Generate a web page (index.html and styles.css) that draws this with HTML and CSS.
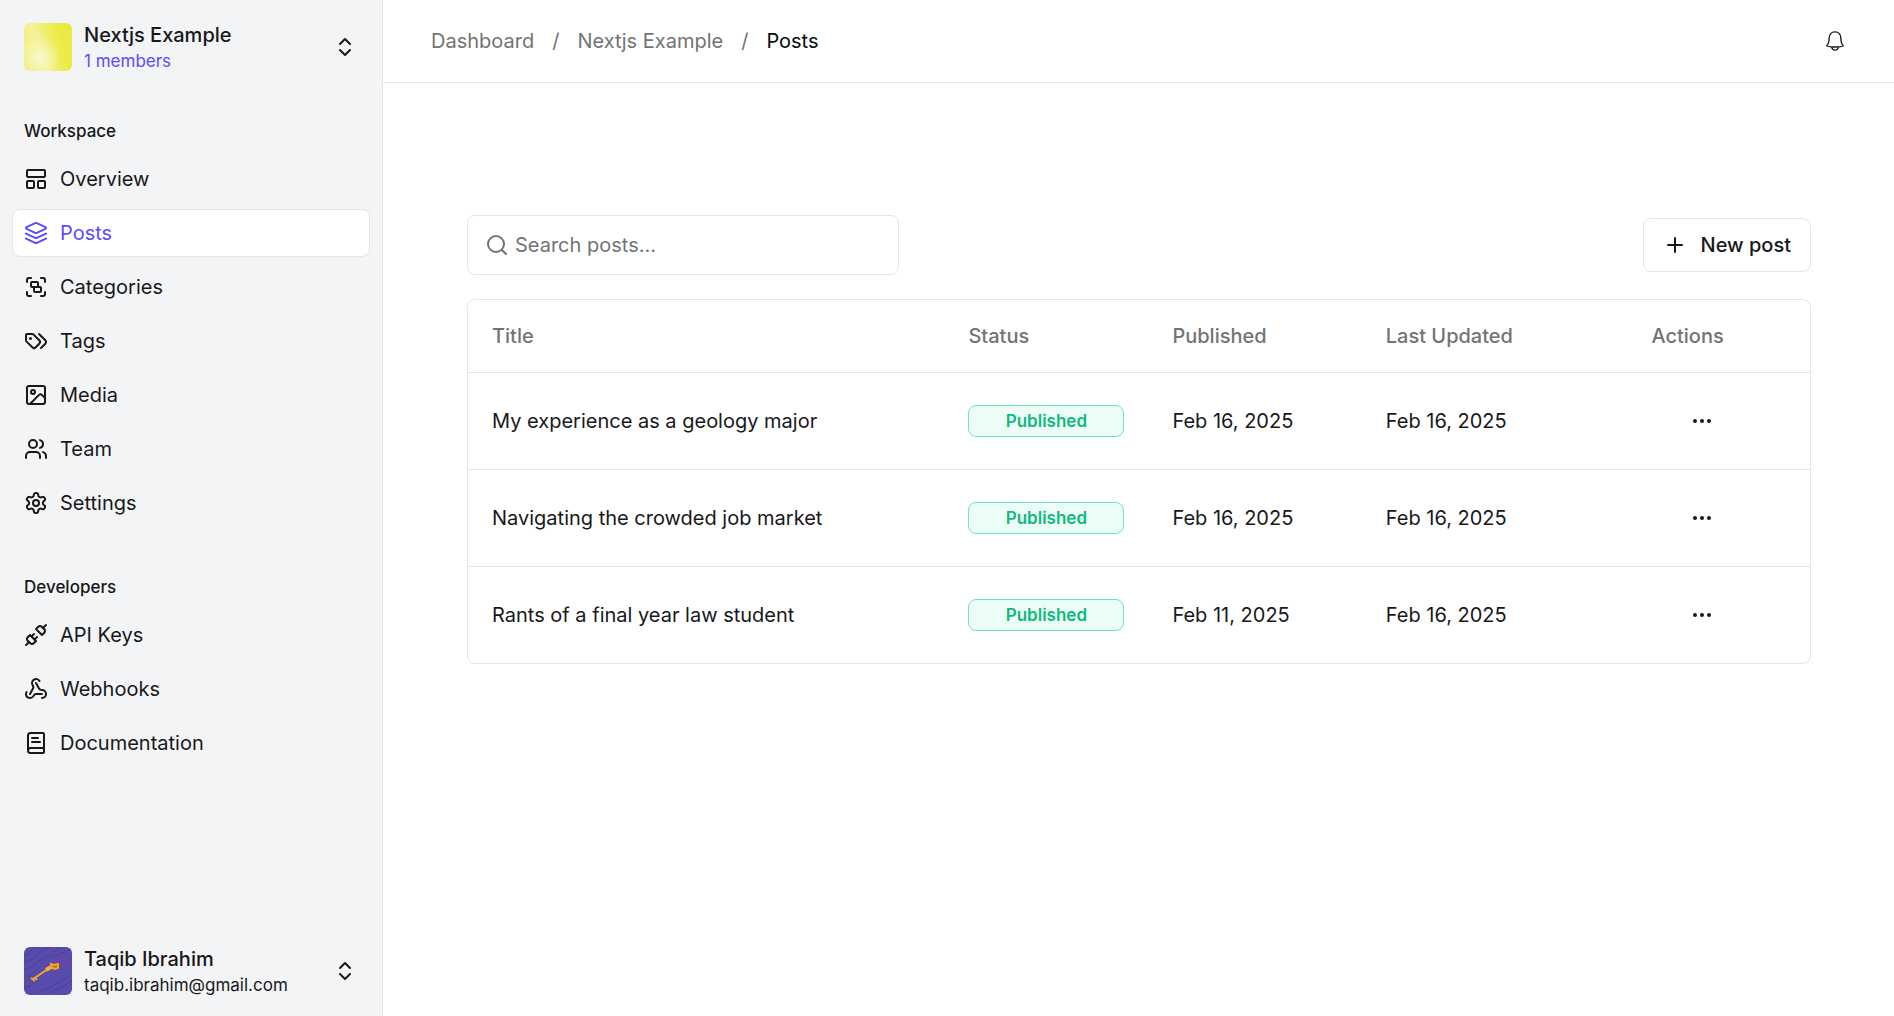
FILE: index.html
```html
<!DOCTYPE html>
<html lang="en">
<head>
<meta charset="utf-8">
<meta name="viewport" content="width=device-width, initial-scale=1">
<title>Posts – Nextjs Example</title>
<link rel="stylesheet" href="styles.css">
</head>
<body>
<div class="app">
  <aside class="sidebar">
    <button class="switcher" type="button">
      <span class="avatar avatar-workspace"></span>
      <span class="switcher-text">
        <span class="switcher-name">Nextjs Example</span>
        <span class="switcher-sub accent">1 members</span>
      </span>
      <svg class="icon chevrons" viewBox="0 0 24 24"><path d="m7 15 5 5 5-5"/><path d="m7 9 5-5 5 5"/></svg>
    </button>

    <nav class="nav">
      <section class="nav-group">
        <h2 class="nav-heading">Workspace</h2>
        <a class="nav-link" href="#"><svg class="icon" viewBox="0 0 24 24"><rect width="18" height="7" x="3" y="3" rx="1"/><rect width="7" height="7" x="3" y="14" rx="1"/><rect width="7" height="7" x="14" y="14" rx="1"/></svg>Overview</a>
        <a class="nav-link active" href="#" aria-current="page"><svg class="icon" viewBox="0 0 24 24"><path d="m12.83 2.18a2 2 0 0 0-1.66 0L2.6 6.08a1 1 0 0 0 0 1.83l8.58 3.91a2 2 0 0 0 1.66 0l8.58-3.9a1 1 0 0 0 0-1.83Z"/><path d="m22 17.65-9.17 4.16a2 2 0 0 1-1.66 0L2 17.65"/><path d="m22 12.65-9.17 4.16a2 2 0 0 1-1.66 0L2 12.65"/></svg>Posts</a>
        <a class="nav-link" href="#"><svg class="icon" viewBox="0 0 24 24"><path d="M3 7V5c0-1.100.9-2 2-2h2"/><path d="M17 3h2c1.100 0 2 .9 2 2v2"/><path d="M21 17v2c0 1.100-.9 2-2 2h-2"/><path d="M7 21H5c-1.100 0-2-.9-2-2v-2"/><rect width="7" height="5" x="7" y="7" rx="1"/><rect width="7" height="5" x="10" y="12" rx="1"/></svg>Categories</a>
        <a class="nav-link" href="#"><svg class="icon" viewBox="0 0 24 24"><path d="m15 5 6.300 6.300a2.400 2.400 0 0 1 0 3.400L17 19"/><path d="M9.586 5.586A2 2 0 0 0 8.172 5H3a1 1 0 0 0-1 1v5.172a2 2 0 0 0 .586 1.414L8.290 18.290a2.426 2.426 0 0 0 3.420 0l3.580-3.580a2.426 2.426 0 0 0 0-3.420z"/><circle cx="6.500" cy="9.500" r=".5" fill="currentColor"/></svg>Tags</a>
        <a class="nav-link" href="#"><svg class="icon" viewBox="0 0 24 24"><rect width="18" height="18" x="3" y="3" rx="2"/><circle cx="9" cy="9" r="2"/><path d="m21 15-3.086-3.086a2 2 0 0 0-2.828 0L6 21"/></svg>Media</a>
        <a class="nav-link" href="#"><svg class="icon" viewBox="0 0 24 24"><path d="M16 21v-2a4 4 0 0 0-4-4H6a4 4 0 0 0-4 4v2"/><circle cx="9" cy="7" r="4"/><path d="M22 21v-2a4 4 0 0 0-3-3.870"/><path d="M16 3.130a4 4 0 0 1 0 7.750"/></svg>Team</a>
        <a class="nav-link" href="#"><svg class="icon" viewBox="0 0 24 24"><path d="M12.220 2h-.44a2 2 0 0 0-2 2v.18a2 2 0 0 1-1 1.730l-.43.25a2 2 0 0 1-2 0l-.15-.08a2 2 0 0 0-2.730.73l-.22.38a2 2 0 0 0 .73 2.730l.15.1a2 2 0 0 1 1 1.720v.51a2 2 0 0 1-1 1.740l-.15.09a2 2 0 0 0-.73 2.730l.22.38a2 2 0 0 0 2.730.73l.15-.08a2 2 0 0 1 2 0l.43.25a2 2 0 0 1 1 1.730V20a2 2 0 0 0 2 2h.44a2 2 0 0 0 2-2v-.18a2 2 0 0 1 1-1.730l.43-.25a2 2 0 0 1 2 0l.15.08a2 2 0 0 0 2.730-.73l.22-.39a2 2 0 0 0-.73-2.730l-.15-.08a2 2 0 0 1-1-1.740v-.5a2 2 0 0 1 1-1.740l.15-.09a2 2 0 0 0 .73-2.730l-.22-.38a2 2 0 0 0-2.730-.73l-.15.08a2 2 0 0 1-2 0l-.43-.25a2 2 0 0 1-1-1.730V4a2 2 0 0 0-2-2z"/><circle cx="12" cy="12" r="3"/></svg>Settings</a>
      </section>

      <section class="nav-group">
        <h2 class="nav-heading">Developers</h2>
        <a class="nav-link" href="#"><svg class="icon" viewBox="0 0 24 24"><path d="m19 5 3-3"/><path d="m2 22 3-3"/><path d="M6.300 20.300a2.400 2.400 0 0 0 3.400 0L12 18l-6-6-2.300 2.300a2.400 2.400 0 0 0 0 3.400Z"/><path d="M7.500 13.500 10 11"/><path d="M10.500 16.500 13 14"/><path d="m12 6 6 6 2.300-2.300a2.400 2.400 0 0 0 0-3.400l-2.600-2.600a2.400 2.400 0 0 0-3.400 0Z"/></svg>API Keys</a>
        <a class="nav-link" href="#"><svg class="icon" viewBox="0 0 24 24"><path d="M18 16.980h-5.990c-1.100 0-1.950.94-2.480 1.900A4 4 0 0 1 2 17c.01-.7.2-1.400.57-2"/><path d="m6 17 3.130-5.780c.53-.97.1-2.180-.5-3.100a4 4 0 1 1 6.890-4.060"/><path d="m12 6 3.130 5.730C15.660 12.700 16.900 13 18 13a4 4 0 0 1 0 8"/></svg>Webhooks</a>
        <a class="nav-link" href="#"><svg class="icon" viewBox="0 0 24 24"><path d="M4 19.500v-15A2.500 2.500 0 0 1 6.500 2H19a1 1 0 0 1 1 1v18a1 1 0 0 1-1 1H6.500a1 1 0 0 1 0-5H20"/><path d="M8 11h8"/><path d="M8 7h6"/></svg>Documentation</a>
      </section>
    </nav>

    <button class="switcher" type="button">
      <svg class="avatar" viewBox="0 0 48 48">
        <rect width="48" height="48" fill="#574bab"/>
        <g fill="none" stroke="#4d419f" stroke-width="1"><path d="M0 8c8-1 8-7 15-8M0 15c12-1 14-12 26-15M0 23c9-2 13-9 20-12s10-8 16-11M3 29c6 0 8-6 12-8M0 40c8 0 9-5 15-7M12 48c5-7 13-6 18-10s12-5 18-12M26 46c4-4 10-4 15-8l7-4M27 11c5-4 13-4 21-10"/></g>
        <path d="M31 16c1-4 12-5 14-2s-7 6-14 2" fill="none" stroke="#a03a86" stroke-width="1"/>
        <path d="m9 32 18-12" stroke="#f6a51c" stroke-width="2"/>
        <path d="m7 31 4 3M11 30l2 3" stroke="#f6a51c" stroke-width="2"/>
        <path d="m22 23 5-3" stroke="#e9b04a" stroke-width="4"/>
        <path d="m27 17 3 1 4-1v4l-3 1-3-1z" fill="#b87417" stroke="#f6a51c" stroke-width="2"/>
      </svg>
      <span class="switcher-text">
        <span class="switcher-name">Taqib Ibrahim</span>
        <span class="switcher-sub">taqib.ibrahim@gmail.com</span>
      </span>
      <svg class="icon chevrons" viewBox="0 0 24 24"><path d="m7 15 5 5 5-5"/><path d="m7 9 5-5 5 5"/></svg>
    </button>
  </aside>

  <div class="main">
    <header class="topbar">
      <nav class="breadcrumb" aria-label="Breadcrumb">
        <a href="#">Dashboard</a><span>/</span><a href="#">Nextjs Example</a><span>/</span><a class="current" href="#" aria-current="page">Posts</a>
      </nav>
      <button class="icon-button" type="button" aria-label="Notifications">
        <svg class="bell" viewBox="0 0 24 24"><path d="M4 16c1.200-1.800 1.600-3.500 1.600-7C5.600 5 8 2 12 2s6.400 3 6.400 7c0 3.500.4 5.200 1.600 7 .5.700 1 .900 1 1.300 0 .6-4 1.200-9 1.200s-9-.6-9-1.200c0-.4.500-.6 1-1.300Z"/><path d="M8.500 18.500c.2 2 1.600 3.500 3.500 3.500s3.300-1.500 3.500-3.500"/></svg>
      </button>
    </header>

    <main class="content">
      <div class="toolbar">
        <label class="search">
          <svg class="icon" viewBox="0 0 24 24"><circle cx="11" cy="11" r="8"/><path d="m21 21-4.300-4.300"/></svg>
          <input type="text" placeholder="Search posts..." aria-label="Search posts">
        </label>
        <button class="new-post" type="button">
          <svg class="icon" viewBox="0 0 24 24"><path d="M5 12h14"/><path d="M12 5v14"/></svg>
          New post
        </button>
      </div>

      <div class="table-card">
        <table>
          <colgroup><col class="col-title"><col class="col-status"><col class="col-published"><col class="col-updated"><col class="col-actions"></colgroup>
          <thead>
            <tr><th>Title</th><th>Status</th><th>Published</th><th>Last Updated</th><th>Actions</th></tr>
          </thead>
          <tbody>
            <tr>
              <td>My experience as a geology major</td>
              <td><span class="badge">Published</span></td>
              <td>Feb 16, 2025</td><td>Feb 16, 2025</td>
              <td><button class="row-menu" type="button" aria-label="Open menu"><svg class="icon" viewBox="0 0 24 24"><circle cx="12" cy="12" r="1"/><circle cx="19" cy="12" r="1"/><circle cx="5" cy="12" r="1"/></svg></button></td>
            </tr>
            <tr>
              <td>Navigating the crowded job market</td>
              <td><span class="badge">Published</span></td>
              <td>Feb 16, 2025</td><td>Feb 16, 2025</td>
              <td><button class="row-menu" type="button" aria-label="Open menu"><svg class="icon" viewBox="0 0 24 24"><circle cx="12" cy="12" r="1"/><circle cx="19" cy="12" r="1"/><circle cx="5" cy="12" r="1"/></svg></button></td>
            </tr>
            <tr>
              <td>Rants of a final year law student</td>
              <td><span class="badge">Published</span></td>
              <td>Feb 11, 2025</td><td>Feb 16, 2025</td>
              <td><button class="row-menu" type="button" aria-label="Open menu"><svg class="icon" viewBox="0 0 24 24"><circle cx="12" cy="12" r="1"/><circle cx="19" cy="12" r="1"/><circle cx="5" cy="12" r="1"/></svg></button></td>
            </tr>
          </tbody>
        </table>
      </div>
    </main>
  </div>
</div>
</body>
</html>
```
FILE: styles.css
```css
:root {
  --ink: #18181b;
  --muted: #737373;
  --line: #e5e5e5;
  --accent: #5b4bff;
  --panel: #f3f4f6;
}

* { box-sizing: border-box; }

body {
  margin: 0;
  background: #fff;
  color: var(--ink);
  font: 400 20px/30px Inter, "Liberation Sans", sans-serif;
}

a { color: inherit; text-decoration: none; }

button {
  font: inherit;
  color: inherit;
  background: none;
  border: 0;
  padding: 0;
  cursor: pointer;
}

.icon {
  flex: none;
  width: 24px;
  height: 24px;
  fill: none;
  stroke: currentColor;
  stroke-width: 2;
  stroke-linecap: round;
  stroke-linejoin: round;
}

.app { display: flex; min-height: 100vh; }

/* Sidebar */
.sidebar {
  display: flex;
  flex-direction: column;
  flex: none;
  width: 383px;
  padding: 12px 12px 10px;
  background: var(--panel);
  border-right: 1px solid var(--line);
}

.switcher {
  display: flex;
  align-items: center;
  gap: 12px;
  height: 70px;
  padding: 0 12px;
  text-align: left;
}

.avatar { flex: none; width: 48px; height: 48px; border-radius: 6px; }

.avatar-workspace {
  background:
    radial-gradient(circle at 32% 72%, #f8f8c8 0, rgba(248, 248, 200, 0) 45%),
    linear-gradient(75deg, #efee78 0, #f3f29a 35%, #ecec4c 68%, #e9e93c 100%);
}

.switcher-text { display: flex; flex-direction: column; flex: 1; }
.switcher-name { font-weight: 500; line-height: 28px; }
.switcher-sub { font-size: 17px; line-height: 24px; }
.accent { color: var(--accent); }
.chevrons { margin-right: 1px; }

.nav { display: flex; flex-direction: column; flex: 1; gap: 42px; padding-top: 31px; }
.nav-group { display: flex; flex-direction: column; gap: 6px; }
.nav-heading { margin: 0; padding: 0 12px; font-size: 17px; font-weight: 500; line-height: 36px; }

.nav-link {
  display: flex;
  align-items: center;
  gap: 12px;
  height: 48px;
  padding: 0 11px;
  border: 1px solid transparent;
  border-radius: 8px;
}

.nav-link.active { background: #fff; border-color: var(--line); color: var(--accent); }

/* Main column */
.main { flex: 1; min-width: 0; }

.topbar {
  display: flex;
  align-items: center;
  justify-content: space-between;
  height: 83px;
  padding: 0 48px;
  border-bottom: 1px solid var(--line);
}

.breadcrumb { display: flex; gap: 18px; color: var(--muted); }
.breadcrumb .current { color: #0a0a0a; }
.icon-button { display: flex; }

.bell {
  width: 22px;
  height: 22px;
  fill: none;
  stroke: currentColor;
  stroke-width: 1.5;
  stroke-linejoin: round;
}

.content { padding: 132px 83px 48px 84px; }

.toolbar { display: flex; align-items: center; justify-content: space-between; margin-bottom: 24px; }

.search {
  display: flex;
  align-items: center;
  gap: 6px;
  width: 432px;
  height: 60px;
  padding: 0 17px;
  border: 1px solid var(--line);
  border-radius: 8px;
  color: var(--muted);
}

.search input {
  flex: 1;
  min-width: 0;
  padding: 0;
  border: 0;
  outline: 0;
  background: none;
  font: inherit;
  color: var(--ink);
}

.search input::placeholder { color: var(--muted); opacity: 1; }

.new-post {
  display: flex;
  align-items: center;
  gap: 14px;
  height: 54px;
  padding: 0 19px;
  border: 1px solid var(--line);
  border-radius: 8px;
  font-weight: 500;
}

/* Posts table */
.table-card { border: 1px solid var(--line); border-radius: 8px; }

table { width: 100%; border-collapse: collapse; table-layout: fixed; }
.col-title { width: 35.5%; }
.col-status { width: 15.2%; }
.col-published { width: 15.9%; }
.col-updated { width: 19.8%; }

th, td { padding: 0 24px; text-align: left; vertical-align: middle; }
th { height: 72px; color: var(--muted); font-weight: 500; }
td { height: 97px; border-top: 1px solid var(--line); }

.badge {
  display: block;
  border: 1px solid #6ee7b7;
  border-radius: 8px;
  background: #ecfdf5;
  color: #10b981;
  font-size: 17px;
  font-weight: 600;
  line-height: 30px;
  text-align: center;
}

.row-menu { display: flex; justify-content: center; align-items: center; width: 102px; height: 48px; }
```
